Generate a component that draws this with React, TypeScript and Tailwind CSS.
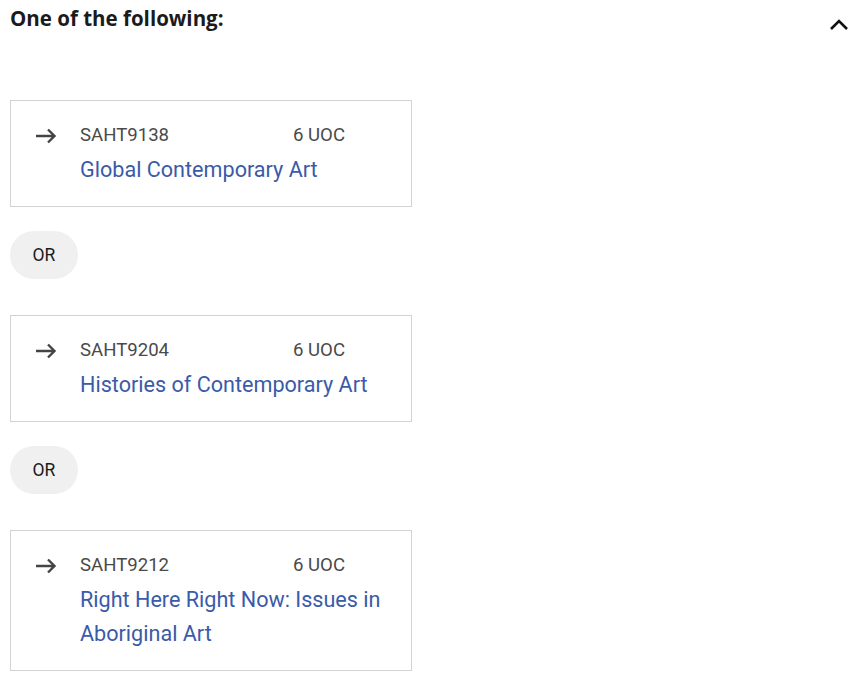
const courses = [
  { code: "SAHT9138", uoc: 6, title: "Global Contemporary Art" },
  { code: "SAHT9204", uoc: 6, title: "Histories of Contemporary Art" },
  { code: "SAHT9212", uoc: 6, title: "Right Here Right Now: Issues in Aboriginal Art" },
];

function ArrowIcon() {
  return (
    <svg width="22" height="16" viewBox="0 0 22 16" fill="none" className="shrink-0">
      <path d="M1 8h19M13 1.5L19.5 8L13 14.5" stroke="#444" strokeWidth="2.4" strokeLinecap="butt" strokeLinejoin="miter" />
    </svg>
  );
}

function CourseCard({ code, uoc, title }: { code: string; uoc: number; title: string }) {
  return (
    <div className="w-[402px] border border-[#d3d3d3] bg-white pl-6 pr-6 pt-[18px] pb-[19px] flex gap-[23px]">
      <div className="h-[34px] flex items-center">
        <ArrowIcon />
      </div>
      <div className="flex-1 min-w-0">
        <div className="h-[34px] flex items-center text-[18.6px] text-[#4a4a4a]">
          <span className="w-[213px]">{code}</span>
          <span>{uoc} UOC</span>
        </div>
        <a href="#" className="block text-[21.6px] leading-[34px] text-[#3a5ba8]">
          {title}
        </a>
      </div>
    </div>
  );
}

export default function App() {
  return (
    <div className="min-h-screen bg-white pl-[10px] pr-[17px]" style={{ fontFamily: "Roboto, sans-serif" }}>
      <div className="h-[100px] flex items-start justify-between">
        <h2
          className="pt-[4px] text-[20.5px] leading-[28px] font-bold text-[#1b1b1b]"
          style={{ fontFamily: "'Open Sans', sans-serif" }}
        >
          One of the following:
        </h2>
        <svg width="20" height="14" viewBox="0 0 20 14" fill="none" className="mt-[18px]">
          <path d="M2 11L10 3L18 11" stroke="#111" strokeWidth="2.6" />
        </svg>
      </div>
      {courses.map((c, i) => (
        <div key={c.code}>
          {i > 0 && (
            <div className="mt-6 mb-9 w-[68px] h-12 rounded-full bg-[#f0f0f0] flex items-center justify-center text-[17.5px] text-[#1b1b1b]">
              OR
            </div>
          )}
          <CourseCard {...c} />
        </div>
      ))}
    </div>
  );
}
